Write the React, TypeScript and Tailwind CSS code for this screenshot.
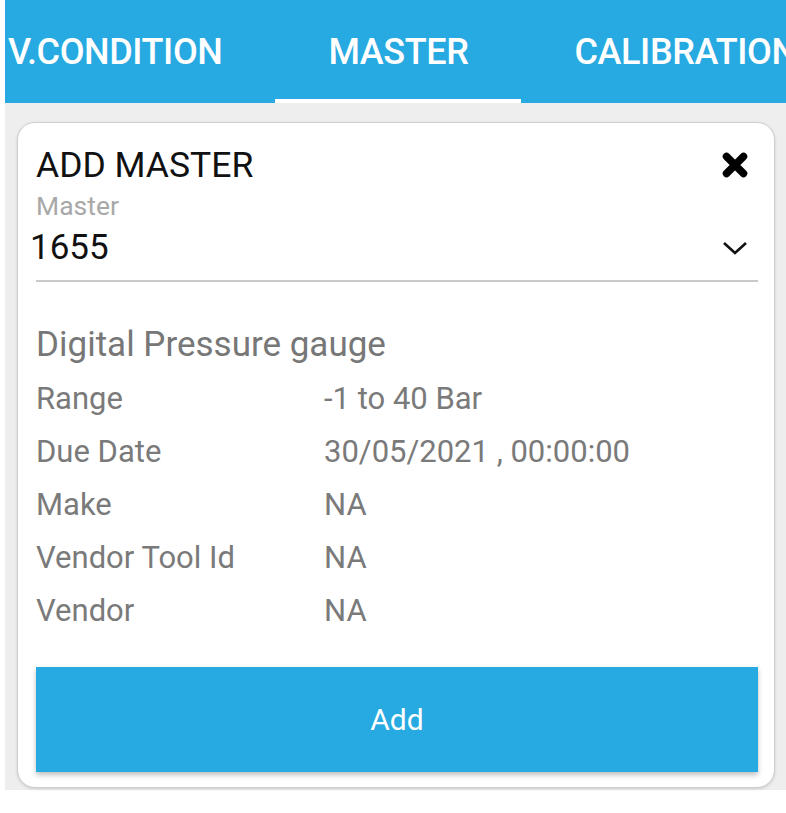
import React from 'react';

const tabs = ['V.CONDITION', 'MASTER', 'CALIBRATION'];

const details: [string, string][] = [
  ['Range', '-1 to 40 Bar'],
  ['Due Date', '30/05/2021 , 00:00:00'],
  ['Make', 'NA'],
  ['Vendor Tool Id', 'NA'],
  ['Vendor', 'NA'],
];

const App: React.FC = () => {
  return (
    <div className="w-[786px] h-[813px] bg-white font-['Roboto',sans-serif] overflow-hidden">
      <div className="ml-[5px] flex flex-col h-[790px] bg-[#eeeeee]">
        {/* Tab strip (scrolled so MASTER sits in the middle) */}
        <div className="h-[103px] bg-[#27a9e1] flex overflow-hidden shrink-0">
          <div className="flex -ml-[50px]">
            {tabs.map((t) => (
              <div
                key={t}
                className="relative flex items-center px-[53px] text-[36px] font-medium text-white whitespace-nowrap tracking-[-0.4px]"
              >
                {t}
                {t === 'MASTER' && (
                  <span className="absolute left-0 right-0 bottom-0 h-[4px] bg-white" />
                )}
              </div>
            ))}
          </div>
        </div>

        {/* Card */}
        <div className="flex-1 pt-[19px] pl-[12px] pr-[11px] pb-[2px]">
          <div className="h-full bg-white rounded-[18px] border border-[#cfcfcf] shadow-[0_1px_3px_rgba(0,0,0,0.15)] pl-[18px] pr-[16px] pt-[22px] flex flex-col">
            <div className="flex items-center justify-between h-[40px]">
              <span className="text-[35.5px] leading-[40px] text-[#111]">ADD MASTER</span>
              <svg width="26" height="26" viewBox="0 0 26 26" className="mr-[10px]">
                <path d="M4.5 4.5 L21.5 21.5 M21.5 4.5 L4.5 21.5" stroke="#000" strokeWidth="7.5" strokeLinecap="round" />
              </svg>
            </div>

            <div className="mt-[7px] text-[26.5px] leading-[28px] text-[#a8a8a8]">Master</div>

            <div className="mt-[8px] flex items-center justify-between h-[40px]">
              <span className="text-[35px] leading-[40px] text-[#111] -ml-[6px]">1655</span>
              <svg width="26" height="16" viewBox="0 0 26 16" className="mr-[10px]">
                <path d="M2 3 L13 13 L24 3" stroke="#111" strokeWidth="2.6" fill="none" />
              </svg>
            </div>
            <div className="mt-[12px] h-[2px] bg-[#c9c9c9]" />

            <div className="mt-[44px] text-[35px] leading-[37px] text-[#777]">Digital Pressure gauge</div>

            <div className="mt-[9px] grid grid-cols-[288px_1fr]">
              {details.map(([k, v]) => (
                <React.Fragment key={k}>
                  <div className="text-[31px] leading-[53px] text-[#7a7a7a]">{k}</div>
                  <div className="text-[31px] leading-[53px] text-[#7a7a7a]">{v}</div>
                </React.Fragment>
              ))}
            </div>

            <button className="mt-[30px] h-[105px] w-full bg-[#27a9e1] text-white text-[30px] shadow-[0_3px_5px_rgba(0,0,0,0.25)]">
              Add
            </button>
          </div>
        </div>
      </div>
    </div>
  );
};

export default App;
